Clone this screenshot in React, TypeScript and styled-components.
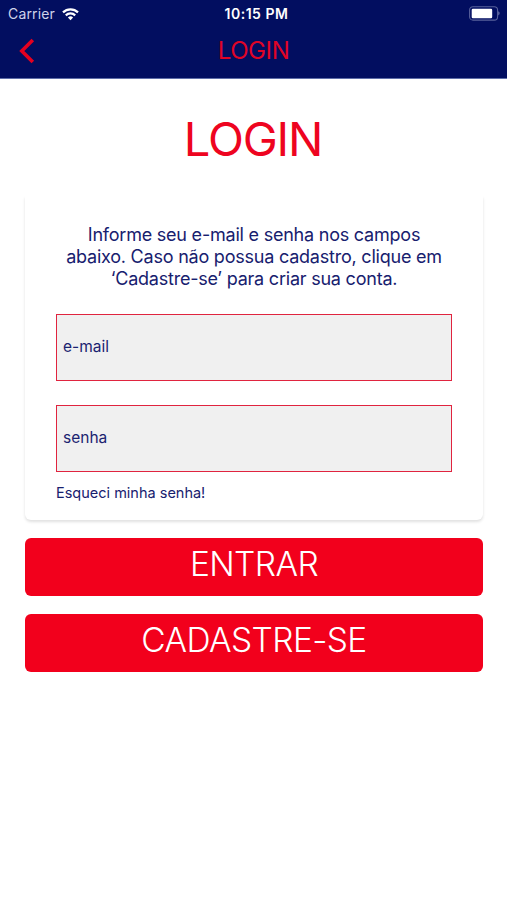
import React from "react";
import styled, { createGlobalStyle } from "styled-components";

const navy = "#020e60";
const red = "#f2001c";

const GlobalStyle = createGlobalStyle`
  * { box-sizing: border-box; }
  body { margin: 0; background: #fff; font-family: Inter, sans-serif; }
`;

const Screen = styled.main`
  width: 507px;
  height: 900px;
  overflow: hidden;
  background: #fff;
`;

const Header = styled.header`
  height: 79px;
  background: ${navy};
  border-bottom: 1px solid #5e6da8;
`;

const StatusBar = styled.div`
  display: grid;
  grid-template-columns: 1fr auto 1fr;
  align-items: center;
  height: 28px;
  padding: 0 7px 0 8px;
  color: #fff;
`;

const Carrier = styled.div`
  display: flex;
  align-items: center;
  gap: 7px;
  font-size: 14px;
  line-height: 28px;
  letter-spacing: 0.15px;
  color: #cfd3ea;
`;

const Clock = styled.time`
  font-size: 14px;
  font-weight: 600;
  line-height: 28px;
  letter-spacing: 0.5px;
  padding-left: 5px;
`;

const BatteryIcon = styled.svg`
  display: block;
  justify-self: end;
  margin-top: -2px;
`;

const NavBar = styled.nav`
  display: grid;
  grid-template-columns: 60px 1fr 60px;
  align-items: center;
  height: 44px;
`;

const BackButton = styled.button`
  display: flex;
  width: 40px;
  padding: 0 0 0 19px;
  border: 0;
  background: none;
`;

const NavTitle = styled.div`
  text-align: center;
  font-size: 24px;
  line-height: 46px;
  letter-spacing: -0.4px;
  color: #e00426;
`;

const Title = styled.h1`
  margin: 0;
  height: 117px;
  padding: 30px 1px 0 0;
  text-align: center;
  font-size: 47px;
  font-weight: 400;
  line-height: 60px;
  letter-spacing: -1.2px;
  color: #ee0420;
`;

const Content = styled.form`
  display: flex;
  flex-direction: column;
  gap: 18px;
  padding: 0 24px 0 25px;
`;

const Card = styled.section`
  height: 324px;
  padding: 28px 31px 0;
  border-radius: 0 0 6px 6px;
  box-shadow: 0 2px 3px rgba(0, 0, 0, 0.12);
  clip-path: inset(0 -4px -8px -4px);
`;

const Intro = styled.p`
  margin: 0 -12px 24px;
  text-align: center;
  font-size: 18px;
  line-height: 22px;
  letter-spacing: -0.22px;
  color: #17206e;
`;

const Field = styled.input`
  display: block;
  width: 396px;
  height: 67px;
  margin: 0 0 24px;
  padding: 0 6px 2px;
  border: 1px solid #e0243f;
  border-radius: 0;
  background: #f0f0f0;
  font: 15.5px Inter, sans-serif;
  color: ${navy};
  &::placeholder { color: #1b2370; opacity: 1; }
`;

const ForgotLink = styled.a`
  display: block;
  margin-top: -13px;
  font-size: 14.5px;
  line-height: 20px;
  color: #17206e;
`;

const ActionButton = styled.button`
  height: 58px;
  padding: 0 0 6px;
  border: 0;
  border-radius: 6px;
  background: ${red};
  color: #fff;
  font: 340 33.5px Inter, sans-serif;
  letter-spacing: -0.6px;
`;

const introLines = [
  "Informe seu e-mail e senha nos campos",
  "abaixo. Caso não possua cadastro, clique em",
  "‘Cadastre-se’ para criar sua conta.",
];

export default function App() {
  return (
    <>
      <GlobalStyle />
      <Screen>
        <Header>
          <StatusBar>
            <Carrier>
              Carrier
              <svg width="17" height="13" viewBox="0 0 17 13" fill="none" stroke="#fff" strokeWidth="2.2">
                <path d="M1 4.4a10.6 10.6 0 0 1 15 0" />
                <path d="M3.8 7.4a6.7 6.7 0 0 1 9.4 0" />
                <path d="M8.5 12.2 5.9 9.6a3.7 3.7 0 0 1 5.2 0Z" fill="#fff" stroke="none" />
              </svg>
            </Carrier>
            <Clock>10:15 PM</Clock>
            <BatteryIcon width="32" height="15" viewBox="0 0 32 15">
              <rect x="1.6" y="0.7" width="28" height="13.4" rx="3.4" fill="none" stroke="#58619b" strokeWidth="1.1" />
              <rect x="3.7" y="2.7" width="20.5" height="9.5" rx="1.2" fill="#fff" />
              <path d="M30.3 5.3c1.7.7 1.7 3.5 0 4.2Z" fill="#7780b1" />
            </BatteryIcon>
          </StatusBar>
          <NavBar>
            <BackButton aria-label="Voltar" type="button">
              <svg width="16" height="26" viewBox="0 0 16 26" fill="none" stroke="#e40020" strokeWidth="3.6">
                <path d="M13.8 2 2.8 13l11 11" />
              </svg>
            </BackButton>
            <NavTitle>LOGIN</NavTitle>
          </NavBar>
        </Header>
        <Title>LOGIN</Title>
        <Content>
          <Card>
            <Intro>
              {introLines.map((line) => (
                <React.Fragment key={line}>
                  {line}
                  <br />
                </React.Fragment>
              ))}
            </Intro>
            <Field type="email" placeholder="e-mail" />
            <Field type="password" placeholder="senha" />
            <ForgotLink>Esqueci minha senha!</ForgotLink>
          </Card>
          <ActionButton type="button">ENTRAR</ActionButton>
          <ActionButton type="button">CADASTRE-SE</ActionButton>
        </Content>
      </Screen>
    </>
  );
}
